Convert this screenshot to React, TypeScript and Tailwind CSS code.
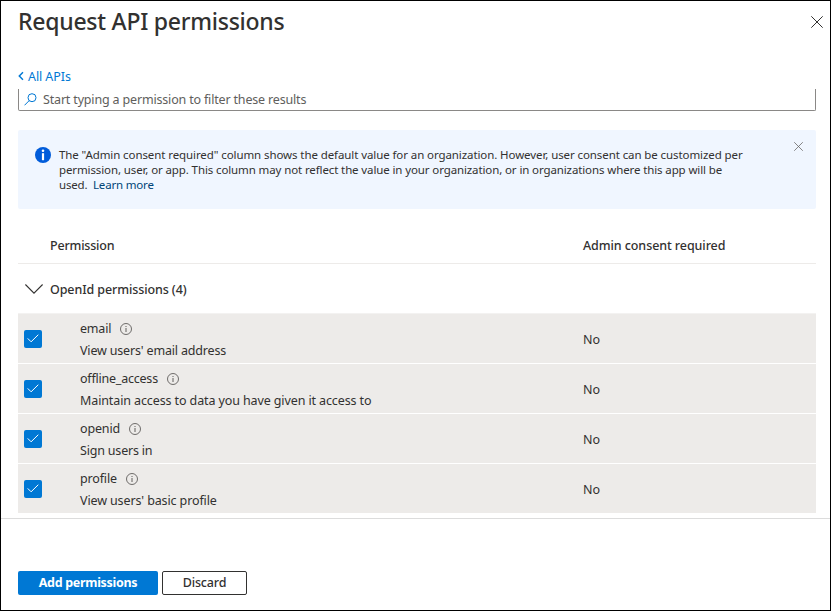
type IconProps = { className?: string };

function Close({ className }: IconProps) {
  return (
    <svg viewBox="0 0 12 12" className={className} fill="none" stroke="currentColor" strokeWidth="1">
      <path d="M.3.3l11.4 11.4M11.7.3L.3 11.7" />
    </svg>
  );
}

function InfoOutline({ className }: IconProps) {
  return (
    <svg viewBox="0 0 12 12" className={className} fill="none" stroke="#605e5c">
      <circle cx="6" cy="6" r="5.5" strokeWidth=".9" />
      <path d="M6 5v4M6 3v1" strokeWidth="1" />
    </svg>
  );
}

const permissions = [
  { name: "email", nameClass: "tracking-[-0.2px]", description: "View users' email address", descClass: "tracking-[-0.17px]" },
  { name: "offline_access", nameClass: "tracking-[-0.22px]", description: "Maintain access to data you have given it access to", descClass: "tracking-[-0.11px]" },
  { name: "openid", nameClass: "tracking-[-0.15px]", description: "Sign users in", descClass: "tracking-[-0.19px]" },
  { name: "profile", nameClass: "tracking-[-0.15px]", description: "View users' basic profile", descClass: "tracking-[-0.12px]" },
];

export default function App() {
  return (
    <div className="flex h-[611px] w-[831px] flex-col overflow-hidden border border-black bg-white font-['Noto_Sans',sans-serif] text-[13px] text-[#323130]">
      <header className="flex h-[66px] shrink-0 justify-between pr-[7px] pl-[17px]">
        <h1 className="mt-[4px] h-8 text-[23px] leading-8 font-medium tracking-[-0.25px] whitespace-nowrap">Request API permissions</h1>
        <Close className="mt-[15px] size-[12px]" />
      </header>

      <main className="flex h-[451px] shrink-0 flex-col px-[17px] pr-[14px]">
        <a className="flex h-[22px] shrink-0 items-start text-[12.5px] leading-[20px] text-[#0078d4]">
          <svg viewBox="0 0 7 10" className="mt-[4px] mr-[4px] h-[10px] w-[6px]" fill="none" stroke="currentColor" strokeWidth="1.7">
            <path d="M5.8.7L1.5 5l4.3 4.3" />
          </svg>
          <span className="tracking-[-0.08px]">All APIs</span>
        </a>

        <div className="flex h-[22px] shrink-0 items-center rounded-b-[2px] border-x border-b border-[#8a8886] pl-[5px] text-[#605e5c]">
          <svg viewBox="0 0 13 13" className="mr-[6px] size-[13px]" fill="none" stroke="#0078d4" strokeWidth="1">
            <circle cx="8" cy="4.7" r="4" />
            <path d="M5.2 7.6L.5 12.3" />
          </svg>
          <span className="pt-[2px] text-[12.5px] tracking-[-0.17px]">Start typing a permission to filter these results</span>
        </div>

        <section className="mt-[19px] flex h-[79px] shrink-0 rounded-[2px] bg-[#f0f6ff] pr-[13px] pl-[17px]">
          <svg viewBox="0 0 16 16" className="mt-[17px] size-4 shrink-0">
            <circle cx="8" cy="8" r="8" fill="#015cda" />
            <circle cx="8" cy="3.8" r="1.3" fill="white" />
            <path d="M6.9 6.2h2.2v7H6.9z" fill="white" />
          </svg>
          <div className="mt-[17px] ml-[8px] text-[11.5px] leading-[15px] whitespace-nowrap">
            <p className="tracking-[-0.09px]">The "Admin consent required" column shows the default value for an organization. However, user consent can be customized per</p>
            <p className="tracking-[-0.115px]">permission, user, or app. This column may not reflect the value in your organization, or in organizations where this app will be</p>
            <p className="tracking-[-0.18px]">used.&nbsp; <a className="text-[#004578]">Learn more</a></p>
          </div>
          <Close className="mt-[12px] ml-auto size-[9px] shrink-0 text-[#605e5c]" />
        </section>

        <div className="mt-[19px] flex h-[36px] shrink-0 border-b border-[#edebe9] text-[12.5px] leading-[36px] font-medium">
          <div className="w-[565px] pl-[32px]"><span className="tracking-[-0.2px]">Permission</span></div>
          <div className="tracking-[-0.08px]">Admin consent required</div>
        </div>

        <div className="flex h-[49px] shrink-0 items-center pl-[7px] text-[12.5px] font-medium">
          <svg viewBox="0 0 18 10" className="mr-[7px] h-[10px] w-[18px]" fill="none" stroke="currentColor" strokeWidth="1.1">
            <path d="M.4.5L9 9.1 17.6.5" />
          </svg>
          <span className="pt-[3px] tracking-[-0.1px]">OpenId permissions (4)</span>
        </div>

        <div className="flex flex-col border-t border-[#f3f2f1]">
          {permissions.map((item) => (
            <div key={item.name} className="flex h-[50px] items-center border-b border-white bg-[#edebe9] text-[12.5px]">
              <div className="ml-[6px] flex size-[18px] shrink-0 items-center justify-center rounded-[2px] bg-[#0078d4]">
                <svg viewBox="0 0 12 9" className="h-[9px] w-[12px]" fill="none" stroke="white" strokeWidth="1">
                  <path d="M.7 4.4l3.4 3.4L11.3.7" />
                </svg>
              </div>
              <div className="ml-[38px] w-[503px] shrink-0 pt-[2px] leading-[22px]">
                <div className="flex items-center">
                  <span className={item.nameClass}>{item.name}</span>
                  <InfoOutline className="ml-[9px] size-[12px]" />
                </div>
                <div><span className={item.descClass}>{item.description}</span></div>
              </div>
              <div className="pt-[3px]">No</div>
            </div>
          ))}
        </div>
      </main>

      <footer className="flex h-[92px] shrink-0 gap-[4px] border-t border-[#dcdcdc] pt-[52px] pl-[17px] text-[12.5px]">
        <button className="flex h-6 w-[140px] items-center justify-center rounded-[2px] bg-[#0078d4] font-bold text-white"><span className="tracking-[-0.3px]">Add permissions</span></button>
        <button className="flex h-6 w-[85px] items-center justify-center rounded-[2px] border border-[#323130] font-medium"><span className="tracking-[-0.15px]">Discard</span></button>
      </footer>
    </div>
  );
}
